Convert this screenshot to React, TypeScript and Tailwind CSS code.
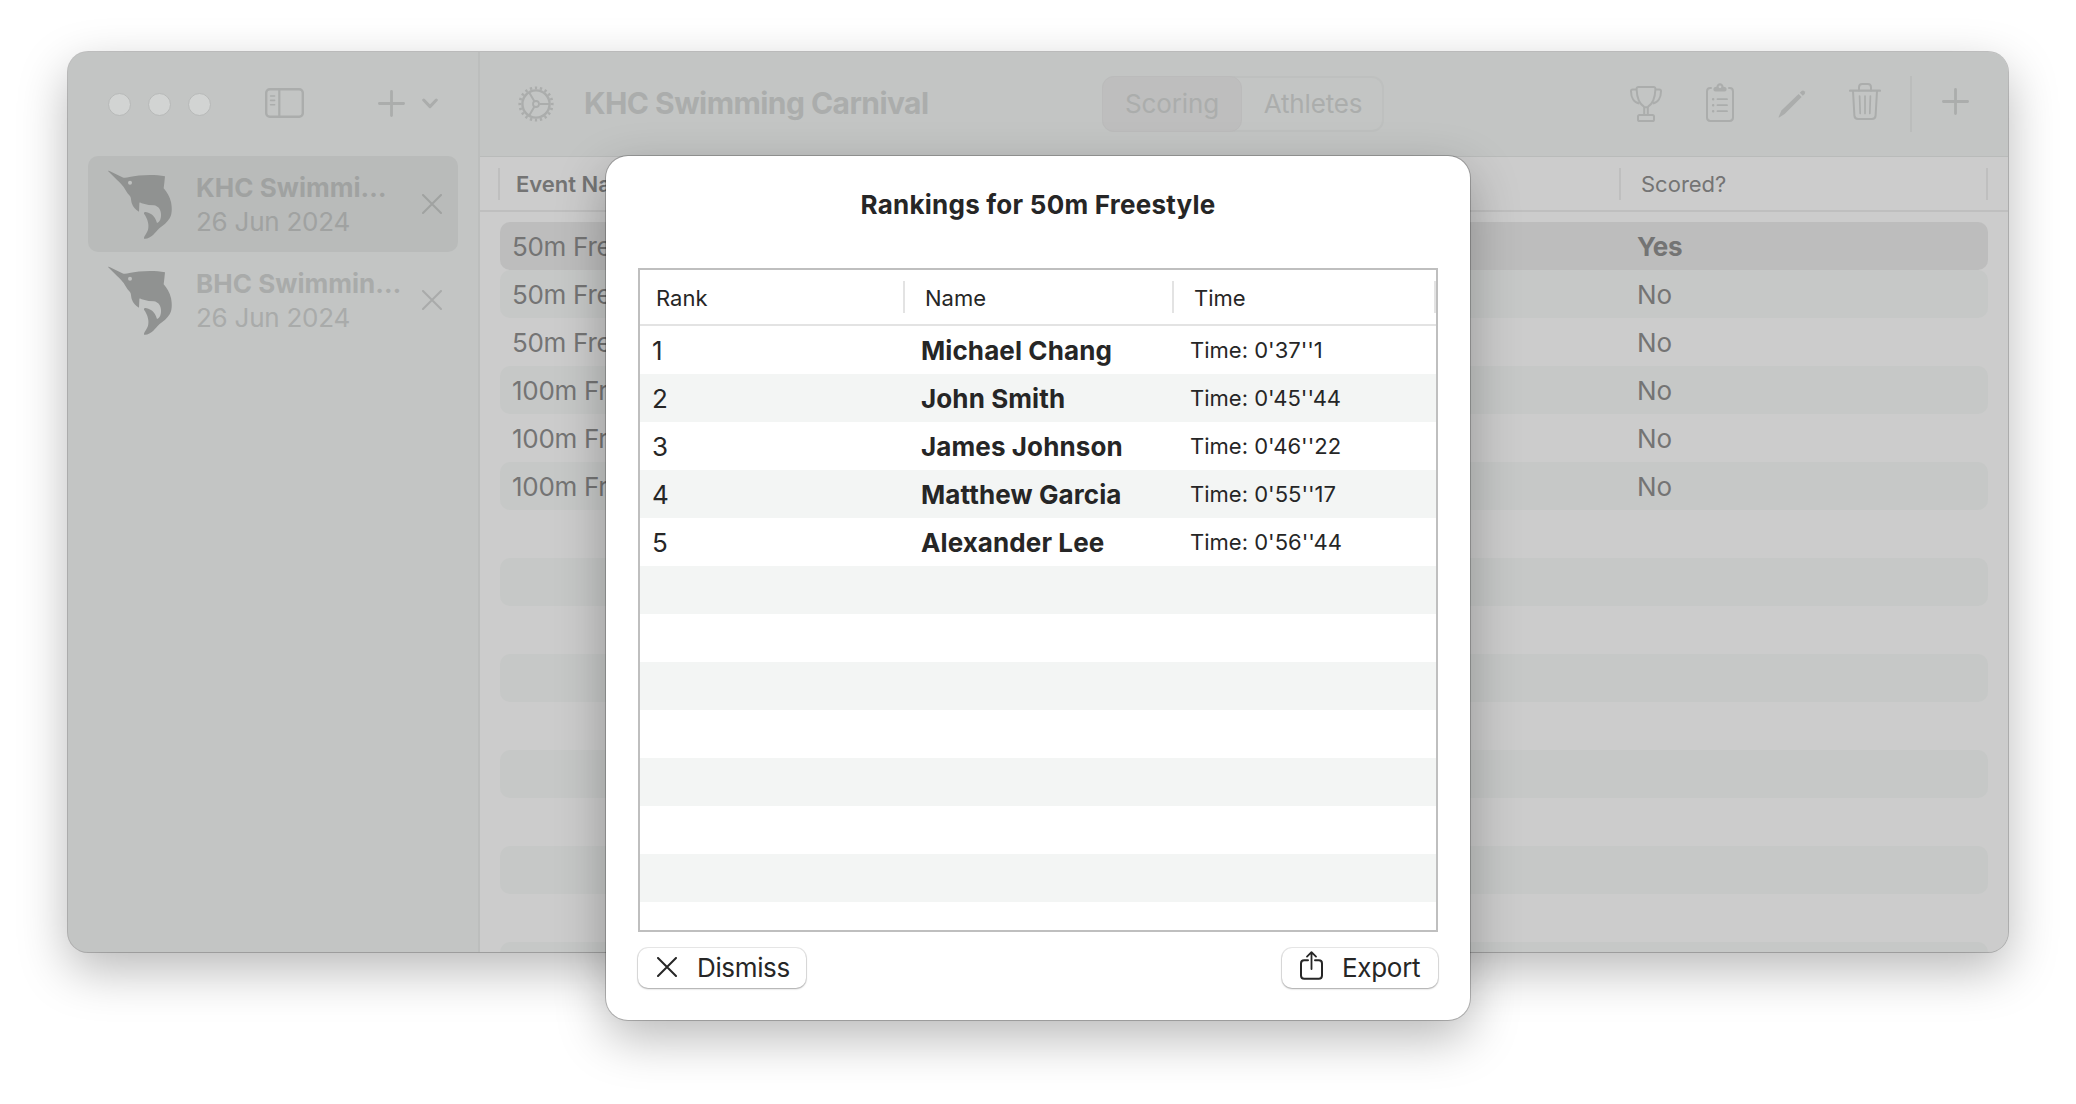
import type { ReactNode } from "react";

const FISH =
  "M54 45C56 44 58 45 60 46L97 64C104 67 111 65 118 63C146 57 192 54 225 61L223 80L221 97C231 109 239 122 243 138C247 158 246 176 239 187C232 199 220 208 208 217C201 224 195 231 190 236C182 243 171 250 162 248C161 240 171 232 174 221C178 207 174 190 162 173C161 166 168 167 175 170C189 175 196 184 201 201C210 198 214 186 213 174C212 158 203 150 192 148L176 147L155 142C151 141 148 136 148 144L147 167C136 160 129 152 126 143C122 134 125 125 118 118C110 110 106 100 101 93C93 83 83 74 73 64Z";

function Fish() {
  return (
    <svg className="block h-[71px] w-[67px] shrink-0" viewBox="51 39 201 213">
      <path d={FISH} fill="#909291" />
      <circle cx="120" cy="80.5" r="6" fill="#bec0bf" />
    </svg>
  );
}

function Cross({ className }: { className: string }) {
  return (
    <svg className={className} viewBox="0 0 20 20" fill="none" stroke="currentColor" strokeWidth="2" strokeLinecap="round">
      <path d="M1 1L19 19M19 1L1 19" />
    </svg>
  );
}

function Plus({ className }: { className: string }) {
  return (
    <svg className={className} viewBox="0 0 27 27" fill="none" stroke="currentColor" strokeWidth="2.8" strokeLinecap="round">
      <path d="M13.5 1.4V25.6M1.4 13.5H25.6" />
    </svg>
  );
}

function SidebarIcon() {
  return (
    <svg className="ml-[54px] h-[30px] w-[39px]" viewBox="0 0 39 30" fill="none" stroke="currentColor" strokeWidth="2.4" strokeLinecap="round">
      <rect x="1.2" y="1.2" width="36.6" height="27.6" rx="3.6" />
      <path d="M14.3 1.5V28.5" strokeWidth="2.2" />
      <path d="M5.6 8H9.6M5.6 12.4H9.6M5.6 16.7H9.6" strokeWidth="1.6" />
    </svg>
  );
}

function Gear() {
  return (
    <svg className="h-9 w-9" viewBox="-18 -18 36 36" fill="none" stroke="currentColor">
      <circle r="13.6" strokeWidth="2.4" />
      <circle r="16.2" strokeWidth="2.8" pathLength="40" strokeDasharray="0.9 1.1" strokeDashoffset="0.45" />
      <circle r="3" strokeWidth="1.8" />
      <path d="M3.5 0H13M-1.8 -3L-6.8 -11.6M-1.8 3L-6.8 11.6" strokeWidth="2" />
    </svg>
  );
}

function Trophy() {
  return (
    <svg className="h-9 w-8" viewBox="0 0 32 36" fill="none" stroke="currentColor" strokeWidth="2" strokeLinejoin="round">
      <path d="M8.5 1H23.5Q25.6 1 25.4 3.5C25 13 22.5 18 17.8 20.8Q16 21.8 14.2 20.8C9.5 18 7 13 6.6 3.5Q6.4 1 8.5 1Z" />
      <path d="M6.8 3.6H2.6Q1 3.6 1 5.2C1 11.5 4 16.5 9.5 17.6M25.2 3.6H29.4Q31 3.6 31 5.2C31 11.5 28 16.5 22.5 17.6" />
      <path d="M14.2 21V28.6M17.8 21V28.6" />
      <rect x="8" y="29" width="16" height="6" rx="1.6" />
    </svg>
  );
}

function Clipboard() {
  return (
    <svg className="h-[39px] w-7" viewBox="0 0 28 39" fill="none" stroke="currentColor" strokeWidth="2" strokeLinecap="round">
      <path d="M5 5H4.4Q1 5 1 8.4V34.6Q1 38 4.4 38H23.6Q27 38 27 34.6V8.4Q27 5 23.6 5H23" />
      <path
        d="M9.4 8.4Q7.4 8.4 7.4 6.4Q7.4 3.8 10.4 3.8Q11 0.2 14 0.2Q17 0.2 17.6 3.8Q20.6 3.8 20.6 6.4Q20.6 8.4 18.6 8.4ZM14 2.4A1.4 1.4 0 1 0 14 5.2A1.4 1.4 0 1 0 14 2.4Z"
        fill="currentColor"
        fillRule="evenodd"
        stroke="none"
      />
      <path d="M11.5 16.2H21M11.5 22.2H21M11.5 28.2H21" strokeWidth="1.8" />
      <path d="M7.1 16.2H7.2M7.1 22.2H7.2M7.1 28.2H7.2" strokeWidth="2.4" />
    </svg>
  );
}

function Pencil() {
  return (
    <svg className="h-7 w-7" viewBox="0 0 28 28" fill="currentColor">
      <path d="M0.6 26.9L3.4 20.6L20.6 3.9L23.6 6.9L6.6 24.1L1.2 27.4Q0.3 27.7 0.6 26.9Z" />
      <path d="M21.8 2.8L23.6 1Q25 0 26.4 1.2Q27.8 2.7 26.7 4L24.8 5.8Z" />
    </svg>
  );
}

function Trash() {
  return (
    <svg className="h-[37px] w-8" viewBox="0 0 32 37" fill="none" stroke="currentColor" strokeWidth="2" strokeLinecap="round" strokeLinejoin="round">
      <path d="M1 7.7H31" strokeWidth="2.2" />
      <path d="M10 7.5V4.4Q10 1 13.2 1H18.8Q22 1 22 4.4V7.5" />
      <path d="M4 8L5.4 32.6Q5.7 36 9 36H23Q26.3 36 26.6 32.6L28 8" />
      <path d="M10.6 13L11.2 30.5M16 13V30.5M21.4 13L20.8 30.5" strokeWidth="1.7" />
    </svg>
  );
}

function Share() {
  return (
    <svg className="mb-[5px] h-[29px] w-[23px]" viewBox="0 0 23 29" fill="none" stroke="currentColor" strokeWidth="2" strokeLinecap="round" strokeLinejoin="round">
      <path d="M8 9.2H4.2Q1 9.2 1 12.4V24.6Q1 27.8 4.2 27.8H18.8Q22 27.8 22 24.6V12.4Q22 9.2 18.8 9.2H15" />
      <path d="M11.5 18V1.6M7 5.6L11.5 1.2L16 5.6" strokeWidth="1.8" />
    </svg>
  );
}

function Carnival({ name, date, selected }: { name: string; date: string; selected?: boolean }) {
  return (
    <div
      className={
        "flex h-24 items-center rounded-[10px] pl-[19px] pr-4 " +
        (selected ? "bg-[#b9bbba] text-[#a0a2a1]" : "text-[#a9abaa]")
      }
    >
      <Fish />
      <div className="ml-[22px] flex-1 whitespace-nowrap pt-0.5 text-[26px] leading-[34px]">
        <div className="font-bold tracking-[0.04px]">{name}</div>
        <div className="tracking-[-0.25px]">{date}</div>
      </div>
      <Cross className="h-5 w-5" />
    </div>
  );
}

const events = [
  ["50m Free", "Yes"],
  ["50m Free", "No"],
  ["50m Free", "No"],
  ["100m Free", "No"],
  ["100m Free", "No"],
  ["100m Free", "No"],
  ...Array.from({ length: 10 }, () => ["", ""]),
];

const rankings = [
  ["1", "Michael Chang", "Time: 0'37''1"],
  ["2", "John Smith", "Time: 0'45''44"],
  ["3", "James Johnson", "Time: 0'46''22"],
  ["4", "Matthew Garcia", "Time: 0'55''17"],
  ["5", "Alexander Lee", "Time: 0'56''44"],
  ...Array.from({ length: 8 }, () => ["", "", ""]),
];

function PushButton({ children, className }: { children: ReactNode; className: string }) {
  return (
    <button
      className={
        "flex h-10 items-center rounded-[10px] bg-white text-[26px] shadow-[0_0_0_1px_rgba(0,0,0,0.09),0_1px_2px_rgba(0,0,0,0.28)] " +
        className
      }
    >
      {children}
    </button>
  );
}

function RankingsDialog() {
  return (
    <div className="absolute left-[606px] top-[156px] flex h-[864px] w-[864px] flex-col rounded-[22px] bg-white px-8 text-[#262626] shadow-[0_0_0_1px_rgba(0,0,0,0.22),0_18px_50px_rgba(0,0,0,0.28)]">
      <h2 className="pt-[33px] text-center text-[26px] font-bold leading-8 tracking-[0.24px]">Rankings for 50m Freestyle</h2>
      <div className="mt-[47px] h-[664px] shrink-0 overflow-hidden border-2 border-[#bfbfbf]">
        <div className="flex h-14 items-center border-b-2 border-[#e3e3e3] text-[22px]">
          <div className="flex h-8 w-[265px] items-center border-r-2 border-[#e3e3e3] pl-4 pt-0.5">Rank</div>
          <div className="flex h-8 w-[269px] items-center border-r-2 border-[#e3e3e3] pl-5 pt-0.5">Name</div>
          <div className="flex h-8 flex-1 items-center border-r-2 border-[#e3e3e3] pl-5 pt-0.5">Time</div>
        </div>
        {rankings.map(([rank, name, time], i) => (
          <div key={i} className="flex h-12 items-center odd:bg-[#f3f5f4]">
            <div className="w-[281px] pl-3 text-[26px]">{rank}</div>
            <div className="w-[269px] text-[26px] font-bold tracking-[0.1px]">{name}</div>
            <div className="text-[22px]">{time}</div>
          </div>
        ))}
      </div>
      <div className="mt-4 flex justify-between">
        <PushButton className="w-[168px] pl-[19px]">
          <Cross className="mb-[3px] h-5 w-5" />
          <span className="ml-5 pb-0.5 tracking-[-0.35px]">Dismiss</span>
        </PushButton>
        <PushButton className="w-[156px] pl-[18px]">
          <Share />
          <span className="ml-[19px] pb-0.5 tracking-[-0.3px]">Export</span>
        </PushButton>
      </div>
    </div>
  );
}

export default function App() {
  return (
    <div className="relative h-[1104px] w-[2076px] overflow-hidden bg-white px-[68px] pt-[52px] font-['Inter',sans-serif]">
      <div className="flex h-[900px] w-[1940px] overflow-hidden rounded-[20px] bg-[#c3c5c4] shadow-[0_0_0_1px_rgba(0,0,0,0.22),0_18px_50px_rgba(0,0,0,0.28)]">
        <aside className="w-[412px] shrink-0 border-r-2 border-[#bcbebd] px-5">
          <div className="flex h-[104px] items-center pb-0.5 pl-5 text-[#abadac]">
            <div className="flex gap-[17px] pt-0.5">
              <span className="h-[23px] w-[23px] rounded-full border border-[#b7b9b8] bg-[#d2d4d3]" />
              <span className="h-[23px] w-[23px] rounded-full border border-[#b7b9b8] bg-[#d2d4d3]" />
              <span className="h-[23px] w-[23px] rounded-full border border-[#b7b9b8] bg-[#d2d4d3]" />
            </div>
            <SidebarIcon />
            <Plus className="ml-[74px] h-[27px] w-[27px]" />
            <svg className="ml-[17px] mt-px h-[11px] w-4" viewBox="0 0 16 11" fill="none" stroke="currentColor" strokeWidth="3" strokeLinecap="round" strokeLinejoin="round">
              <path d="M1.7 2L8 8.6L14.3 2" />
            </svg>
          </div>
          <Carnival name="KHC Swimmi…" date="26 Jun 2024" selected />
          <Carnival name="BHC Swimmin…" date="26 Jun 2024" />
        </aside>
        <main className="flex flex-1 flex-col bg-[#cccccc]">
          <header className="flex h-[105px] shrink-0 items-center border-b border-[#b9bbba] bg-[#c3c5c4] pb-px pl-[38px] text-[#abadac]">
            <Gear />
            <h1 className="ml-[30px] w-[518px] whitespace-nowrap text-[30px] font-bold tracking-[-0.56px]">KHC Swimming Carnival</h1>
            <div className="flex h-14 w-[282px] rounded-xl border-2 border-[#bec0bf] text-[26px] tracking-[-0.15px]">
              <div className="-my-0.5 -ml-0.5 flex w-[140px] items-center justify-center rounded-xl border border-[#bbbbbb] bg-[#bebebe]">Scoring</div>
              <div className="flex flex-1 items-center justify-center pl-0.5">Athletes</div>
            </div>
            <div className="ml-[246px] flex items-center">
              <Trophy />
              <div className="-mt-[3px] ml-11"><Clipboard /></div>
              <div className="ml-11"><Pencil /></div>
              <div className="-mt-[4px] ml-[43px]"><Trash /></div>
              <div className="ml-[29px] h-14 w-0.5 bg-[#bbbdbc]" />
              <Plus className="-mt-1 ml-[30px] h-[27px] w-[27px]" />
            </div>
          </header>
          <div className="flex h-[55px] shrink-0 items-center border-b-2 border-[#bfbfbf] px-[18px] text-[22px] text-[#747474]">
            <div className="flex h-8 w-[1123px] items-center border-x-2 border-[#bfbfbf] pl-4 pt-0.5 font-semibold">Event Name</div>
            <div className="flex h-8 flex-1 items-center border-r-2 border-[#bfbfbf] pl-[20px] pt-0.5">Scored?</div>
            <div className="w-0.5" />
          </div>
          <div className="px-5 pt-[10px] text-[26px] text-[#747474]">
            {events.map(([name, scored], i) => (
              <div
                key={i}
                className={
                  "flex h-12 items-center rounded-[10px] pl-3 " +
                  (i === 0 ? "bg-[#bdbdbd]" : i % 2 ? "bg-[#c6c8c7]" : "")
                }
              >
                <div className="w-[1125px] tracking-[-0.3px]">{name}</div>
                <div className={i === 0 ? "font-bold tracking-[-0.3px]" : ""}>{scored}</div>
              </div>
            ))}
          </div>
        </main>
      </div>
      <RankingsDialog />
    </div>
  );
}
